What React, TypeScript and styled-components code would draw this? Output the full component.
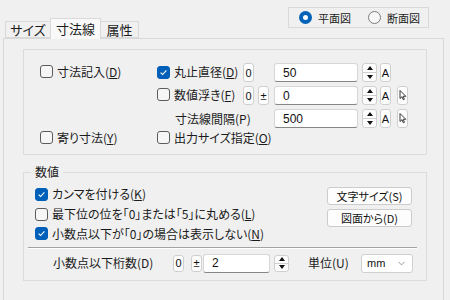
import React from "react";
import styled, { createGlobalStyle } from "styled-components";
import { ChevronDown } from "lucide-react";

const GlobalStyle = createGlobalStyle`
  body {
    margin: 0;
    background: #f0f0f0;
    font-family: "Noto Sans CJK JP", sans-serif;
    font-size: 12px;
    color: #1b1b1b;
    font-feature-settings: "palt";
  }
  u {
    text-underline-offset: 1px;
  }
`;

const Window = styled.div`
  width: 450px;
  height: 300px;
  overflow: hidden;
`;

const Header = styled.div`
  display: flex;
  align-items: flex-end;
  height: 38px;
  padding-left: 6px;
`;

const Tab = styled.div<{ $active?: boolean; $w: number }>`
  position: relative;
  z-index: 1;
  box-sizing: border-box;
  width: ${(p) => p.$w}px;
  height: ${(p) => (p.$active ? 21 : 17)}px;
  margin-bottom: ${(p) => (p.$active ? -1 : 0)}px;
  margin-left: -1px;
  border: 1px solid #d9d9d9;
  border-bottom: ${(p) => (p.$active ? "none" : "1px solid #d9d9d9")};
  background: ${(p) => (p.$active ? "#f9f9f9" : "#f0f0f0")};
  display: flex;
  justify-content: center;
  align-items: center;
  font-size: 13px;
  line-height: 16px;
  padding-top: ${(p) => (p.$active ? 0 : 1)}px;
`;

const RadioBox = styled.div`
  align-self: flex-start;
  margin: 7px 21px 0 auto;
  box-sizing: border-box;
  width: 141px;
  height: 21px;
  border: 1px solid #d9d9d9;
  display: flex;
  align-items: center;
  padding-left: 10px;
  gap: 17px;
`;

const RadioItem = styled.label`
  display: inline-flex;
  align-items: center;
  gap: 6px;
  font-size: 11px;
  line-height: 14px;
`;

const RadioDot = styled.span<{ $on?: boolean }>`
  box-sizing: border-box;
  width: 13px;
  height: 13px;
  border-radius: 50%;
  background: ${(p) => (p.$on ? "#fff" : "#f7f7f7")};
  border: ${(p) => (p.$on ? "4px solid #0062b8" : "1px solid #7c7c7c")};
`;

const Page = styled.div`
  box-sizing: border-box;
  margin-left: 3px;
  width: 441px;
  height: 262px;
  border: 1px solid #d9d9d9;
  border-bottom: none;
  background: #f0f0f0;
  padding: 10px 0 0 19px;
`;

const Group = styled.div`
  box-sizing: border-box;
  width: 404px;
  height: 106px;
  border: 1px solid #dcdcdc;
  padding: 11px 0 0 16px;
`;

const Row = styled.div<{ $h?: number }>`
  display: flex;
  align-items: center;
  height: ${(p) => p.$h ?? 23}px;
`;

const Cell = styled.div<{ $w: number; $pad?: number }>`
  flex: none;
  width: ${(p) => p.$w}px;
  padding-left: ${(p) => p.$pad ?? 0}px;
  box-sizing: border-box;
  white-space: nowrap;
  line-height: 16px;
`;

const CheckWrap = styled.label`
  display: inline-flex;
  align-items: center;
  gap: 4px;
  line-height: 16px;
  white-space: nowrap;
`;

const Box = styled.span<{ $on?: boolean }>`
  box-sizing: border-box;
  width: 13px;
  height: 13px;
  border-radius: 3px;
  flex: none;
  display: inline-flex;
  background: ${(p) => (p.$on ? "#005fb8" : "#f6f6f6")};
  border: 1px solid ${(p) => (p.$on ? "#005fb8" : "#5c5c5c")};
`;

const Check = ({ on, children }: { on?: boolean; children: React.ReactNode }) => (
  <CheckWrap>
    <Box $on={on}>
      {on && (
        <svg width="11" height="11" viewBox="0 0 11 11">
          <polyline
            points="2.6,5.6 4.6,7.5 8.4,3.4"
            fill="none"
            stroke="#fff"
            strokeWidth="1.1"
          />
        </svg>
      )}
    </Box>
    <span>{children}</span>
  </CheckWrap>
);

const MiniBtn = styled.span<{ $gap?: number; $h?: number }>`
  flex: none;
  box-sizing: border-box;
  width: 11px;
  height: ${(p) => p.$h ?? 19}px;
  margin-right: ${(p) => p.$gap ?? 0}px;
  border: 1px solid #cfcfcf;
  border-radius: 3px;
  background: #fdfdfd;
  display: flex;
  align-items: center;
  justify-content: center;
  font-family: "Liberation Sans", sans-serif;
  font-size: 11px;
  color: #111;
`;

const Blank = styled.span<{ $w: number }>`
  flex: none;
  width: ${(p) => p.$w}px;
`;

const TextBox = styled.div<{ $w: number; $h?: number }>`
  flex: none;
  box-sizing: border-box;
  width: ${(p) => p.$w}px;
  height: ${(p) => p.$h ?? 19}px;
  background: #fff;
  border: 1px solid #d6d6d6;
  border-bottom-color: #868686;
  border-radius: 3px;
  padding-left: 8px;
  display: flex;
  align-items: center;
  font-family: "Liberation Sans", sans-serif;
  font-size: 12px;
  color: #111;
`;

const SpinWrap = styled.div<{ $h?: number }>`
  flex: none;
  box-sizing: border-box;
  width: 15px;
  height: ${(p) => p.$h ?? 19}px;
  margin: 0 3px 0 4px;
  border: 1px solid #cfcfcf;
  border-radius: 3px;
  background: #fdfdfd;
  display: flex;
  flex-direction: column;
`;

const SpinHalf = styled.div<{ $top?: boolean }>`
  flex: 1;
  display: flex;
  align-items: center;
  justify-content: center;
  border-bottom: ${(p) => (p.$top ? "1px solid #cfcfcf" : "none")};
`;

const Tri = styled.span<{ $up?: boolean }>`
  width: 0;
  height: 0;
  border-left: 3.5px solid transparent;
  border-right: 3.5px solid transparent;
  ${(p) => (p.$up ? "border-bottom: 4px solid #111;" : "border-top: 4px solid #111;")}
`;

const Spin = ({ h }: { h?: number }) => (
  <SpinWrap $h={h}>
    <SpinHalf $top>
      <Tri $up />
    </SpinHalf>
    <SpinHalf>
      <Tri />
    </SpinHalf>
  </SpinWrap>
);

const PointerBtn = () => (
  <MiniBtn>
    <svg width="8" height="11" viewBox="0 0 8 11">
      <path
        d="M1 0.5 L1 8.5 L3 6.7 L4.3 9.8 L5.4 9.3 L4.2 6.3 L6.8 6.3 Z"
        fill="#fff"
        stroke="#222"
        strokeWidth="0.9"
        strokeLinejoin="round"
      />
    </svg>
  </MiniBtn>
);

const Fieldset = styled.fieldset`
  box-sizing: border-box;
  width: 404px;
  margin: 9px 0 0 0;
  padding: 0 0 7px 0;
  min-width: 0;
  border: 1px solid #dcdcdc;
`;

const Legend = styled.legend`
  margin-left: 7px;
  padding: 0 4px;
  font-size: 12px;
  line-height: 16px;
`;

const Split = styled.div`
  display: flex;
  padding: 4px 14px 0 11px;
`;

const CheckList = styled.div`
  display: flex;
  flex-direction: column;
`;

const ListRow = styled.div<{ $h: number }>`
  height: ${(p) => p.$h}px;
  display: flex;
  align-items: center;
`;

const ButtonCol = styled.div`
  margin-left: auto;
  padding-top: 3px;
  display: flex;
  flex-direction: column;
  gap: 4px;
`;

const PushBtn = styled.button`
  box-sizing: border-box;
  width: 85px;
  height: 18px;
  padding: 0;
  border: 1px solid #cccccc;
  border-radius: 3px;
  background: #fdfdfd;
  font-family: "Noto Sans CJK JP", sans-serif;
  font-feature-settings: "palt";
  font-size: 11px;
  line-height: 14px;
  color: #111;
`;

const Separator = styled.div`
  margin: 4px 9px 0 4px;
  border-top: 1px solid #a3a3a3;
  border-bottom: 1px solid #ffffff;
`;

const BottomRow = styled.div`
  display: flex;
  align-items: center;
  height: 20px;
  margin-top: 4px;
  padding-left: 29px;
`;

const Label = styled.span<{ $w: number }>`
  flex: none;
  width: ${(p) => p.$w}px;
  white-space: nowrap;
  line-height: 16px;
`;

const Select = styled.div`
  box-sizing: border-box;
  width: 52px;
  height: 19px;
  background: #fff;
  border: 1px solid #d0d0d0;
  border-radius: 3px;
  display: flex;
  align-items: center;
  justify-content: space-between;
  padding: 0 5px 0 5px;
  font-family: "Liberation Sans", sans-serif;
  font-size: 11px;
  color: #111;
`;

export default function App() {
  return (
    <Window>
      <GlobalStyle />
      <Header>
        <Tab $w={46}>サイズ</Tab>
        <Tab $w={51} $active>
          寸法線
        </Tab>
        <Tab $w={39}>属性</Tab>
        <RadioBox>
          <RadioItem>
            <RadioDot $on />
            平面図
          </RadioItem>
          <RadioItem>
            <RadioDot />
            断面図
          </RadioItem>
        </RadioBox>
      </Header>
      <Page>
        <Group>
          <Row>
            <Cell $w={117}>
              <Check>
                寸法記入(<u>D</u>)
              </Check>
            </Cell>
            <Cell $w={86}>
              <Check on>
                丸止直径(<u>D</u>)
              </Check>
            </Cell>
            <MiniBtn $gap={4}>0</MiniBtn>
            <Blank $w={16} />
            <TextBox $w={84}>50</TextBox>
            <Spin />
            <MiniBtn>A</MiniBtn>
          </Row>
          <Row>
            <Cell $w={117} />
            <Cell $w={86}>
              <Check>
                数値浮き(<u>F</u>)
              </Check>
            </Cell>
            <MiniBtn $gap={4}>0</MiniBtn>
            <MiniBtn $gap={5}>±</MiniBtn>
            <TextBox $w={84}>0</TextBox>
            <Spin />
            <MiniBtn $gap={6}>A</MiniBtn>
            <PointerBtn />
          </Row>
          <Row>
            <Cell $w={117} />
            <Cell $w={117} $pad={18}>
              寸法線間隔(P)
            </Cell>
            <TextBox $w={84}>500</TextBox>
            <Spin />
            <MiniBtn $gap={6}>A</MiniBtn>
            <PointerBtn />
          </Row>
          <Row $h={17}>
            <Cell $w={117}>
              <Check>
                寄り寸法(<u>Y</u>)
              </Check>
            </Cell>
            <Cell $w={140}>
              <Check>
                出力サイズ指定(<u>O</u>)
              </Check>
            </Cell>
          </Row>
        </Group>
        <Fieldset>
          <Legend>数値</Legend>
          <Split>
            <CheckList>
              <ListRow $h={20}>
                <Check on>
                  カンマを付ける(<u>K</u>)
                </Check>
              </ListRow>
              <ListRow $h={20}>
                <Check>
                  最下位の位を「0」または「5」に丸める(<u>L</u>)
                </Check>
              </ListRow>
              <ListRow $h={19}>
                <Check on>
                  小数点以下が「0」の場合は表示しない(<u>N</u>)
                </Check>
              </ListRow>
            </CheckList>
            <ButtonCol>
              <PushBtn>文字サイズ(S)</PushBtn>
              <PushBtn>図面から(D)</PushBtn>
            </ButtonCol>
          </Split>
          <Separator />
          <BottomRow>
            <Label $w={120}>小数点以下桁数(D)</Label>
            <MiniBtn $gap={7} $h={17}>
              0
            </MiniBtn>
            <MiniBtn $gap={1} $h={17}>
              ±
            </MiniBtn>
            <TextBox $w={67}>2</TextBox>
            <Spin h={17} />
            <Blank $w={16} />
            <Label $w={53}>単位(U)</Label>
            <Select>
              mm
              <ChevronDown size={11} strokeWidth={1.3} color="#555" />
            </Select>
          </BottomRow>
        </Fieldset>
      </Page>
    </Window>
  );
}
